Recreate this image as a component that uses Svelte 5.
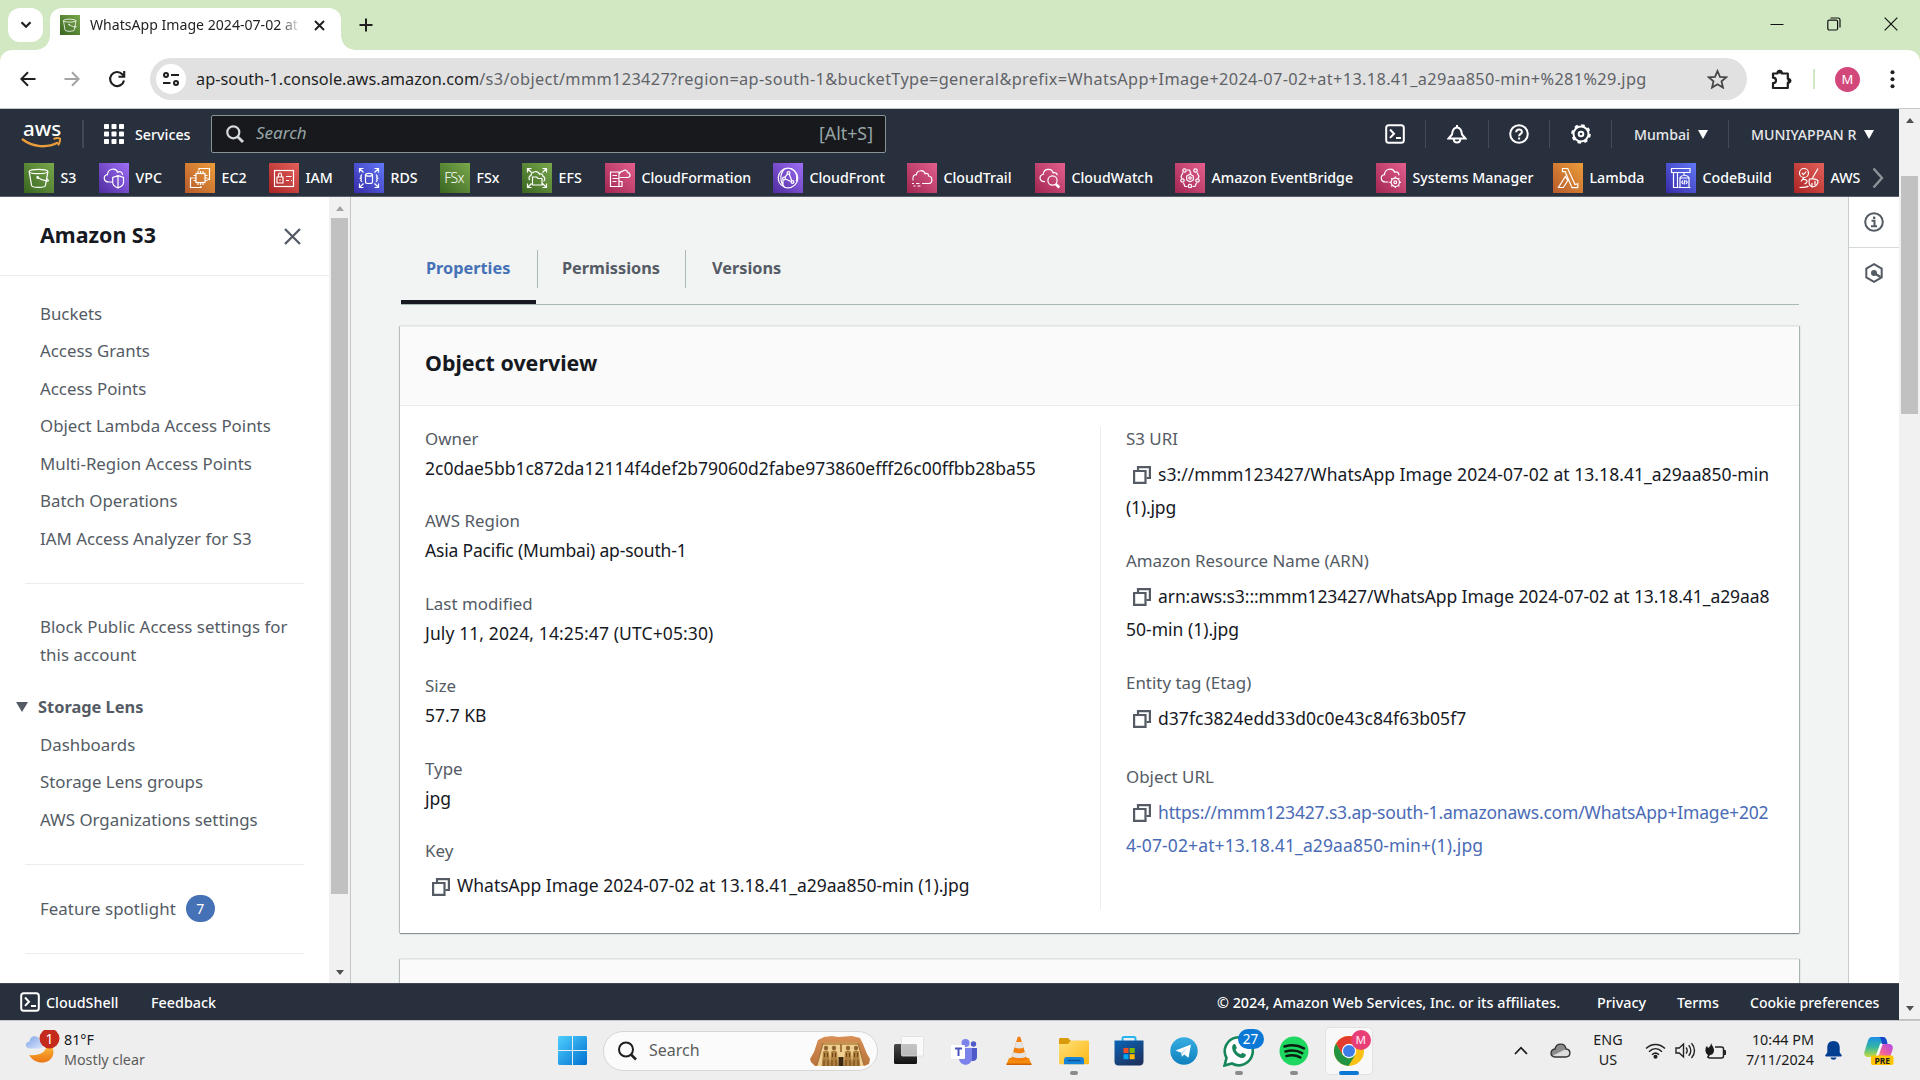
<script>
  const services = [
    { id: 's3', name: 'S3', tone: 'green', w: 75 },
    { id: 'vpc', name: 'VPC', tone: 'purple', w: 86 },
    { id: 'ec2', name: 'EC2', tone: 'orange', w: 84 },
    { id: 'iam', name: 'IAM', tone: 'red', w: 85 },
    { id: 'rds', name: 'RDS', tone: 'blue', w: 86 },
    { id: 'fsx', name: 'FSx', tone: 'green', w: 82 },
    { id: 'efs', name: 'EFS', tone: 'green', w: 83 },
    { id: 'cfn', name: 'CloudFormation', tone: 'pink', w: 168 },
    { id: 'cf', name: 'CloudFront', tone: 'purple', w: 134 },
    { id: 'trail', name: 'CloudTrail', tone: 'pink', w: 128 },
    { id: 'watch', name: 'CloudWatch', tone: 'pink', w: 140 },
    { id: 'bridge', name: 'Amazon EventBridge', tone: 'pink', w: 201 },
    { id: 'ssm', name: 'Systems Manager', tone: 'pink', w: 177 },
    { id: 'lambda', name: 'Lambda', tone: 'orange', w: 113 },
    { id: 'build', name: 'CodeBuild', tone: 'blue', w: 128 },
    { id: 'aws', name: 'AWS', tone: 'red', w: 78 }
  ];
  const favColumns = services.map((s) => s.w + 'px').join(' ');

  const nav = [
    'Buckets',
    'Access Grants',
    'Access Points',
    'Object Lambda Access Points',
    'Multi-Region Access Points',
    'Batch Operations',
    'IAM Access Analyzer for S3'
  ];
  const lens = ['Dashboards', 'Storage Lens groups', 'AWS Organizations settings'];

  // `track` names the letter-spacing class of each line
  const left = [
    { label: 'Owner', lines: ['2c0dae5bb1c872da12114f4def2b79060d2fabe973860efff26c00ffbb28ba55'] },
    { label: 'AWS Region', track: ['tight'], lines: ['Asia Pacific (Mumbai) ap-south-1'] },
    { label: 'Last modified', track: ['loose'], lines: ['July 11, 2024, 14:25:47 (UTC+05:30)'] },
    { label: 'Size', lines: ['57.7 KB'] },
    { label: 'Type', lines: ['jpg'] },
    { label: 'Key', copy: true, lines: ['WhatsApp Image 2024-07-02 at 13.18.41_a29aa850-min (1).jpg'] }
  ];
  const right = [
    { label: 'S3 URI', copy: true, track: ['airy', 'tight'], lines: ['s3://mmm123427/WhatsApp Image 2024-07-02 at 13.18.41_a29aa850-min', '(1).jpg'] },
    { label: 'Amazon Resource Name (ARN)', copy: true, track: ['snug', ''], lines: ['arn:aws:s3:::mmm123427/WhatsApp Image 2024-07-02 at 13.18.41_a29aa8', '50-min (1).jpg'] },
    { label: 'Entity tag (Etag)', copy: true, tall: true, track: ['airy'], lines: ['d37fc3824edd33d0c0e43c84f63b05f7'] },
    { label: 'Object URL', copy: true, link: true, track: ['tight', 'loose'], lines: ['https://mmm123427.s3.ap-south-1.amazonaws.com/WhatsApp+Image+202', '4-07-02+at+13.18.41_a29aa850-min+(1).jpg'] }
  ];
</script>

{#snippet glyph(id)}
  <svg class="glyph" viewBox="0 0 30 30">
    {#if id === 's3'}
      <ellipse cx="14.5" cy="8.5" rx="9.3" ry="2.2" />
      <path d="M5.2 8.6l2.3 13.6c.3 3 13.7 3 14 0l2.4-13.6M14 14.8c2 1.300 6.200 2.900 9 3.300 2 .2 1.600-1.100-.5-2.500" />
      <circle cx="13.700" cy="14.500" r=".8" />
    {:else if id === 'vpc'}
      <path d="M13.500 19H9.600C4 19 4 11.900 8.500 11.600 8.700 5.500 17 4.200 18.700 9.200c2.300-1.500 5 .2 4.800 2.700" />
      <path d="M19 12.600l5.500 1.800v5.200c0 3.200-2.700 4.400-5.500 5.400-2.800-1-5.300-2.200-5.300-5.400v-5.200zM19 12.800v12" />
    {:else if id === 'ec2'}
      <rect x="11" y="10.500" width="9" height="9" />
      <path d="M13 8v2.500M15.500 8v2.500M18 8v2.500M13 19.500V22M15.500 19.500V22M18 19.500V22M8.500 12.500H11M8.500 15H11M8.500 17.500H11M20 12.500h2.500M20 15h2.500M20 17.500h2.500" />
      <path d="M14 7.500V5.500h10.500v10.800h-2M8 15H5.500v9.500H16V23" />
    {:else if id === 'iam'}
      <rect x="5.500" y="7.500" width="19" height="16" />
      <path d="M8 14h6v6H8zM9.500 14v-2.500c0-2 3-2 3 0V14M11 16.300v1.500M17 13.500h5.500M17 17.500h3M22 17.500h1" />
    {:else if id === 'rds'}
      <ellipse cx="15" cy="11.700" rx="3.500" ry="1.400" />
      <path d="M11.500 11.700v7.500c0 1.700 7 1.700 7 0v-7.500M8 11.500l-1.200 1.500.6 1.200-1.200 1 1.200 1-.6 1.300L8 19M22 11.500l1.200 1.500-.6 1.200 1.200 1-1.200 1 .6 1.300L22 19M5.500 9.500v-4h4M5.500 5.500l4 4M20.500 5.500h4v4M24.500 5.500l-4 4M5.500 20.500v4h4M5.500 24.500l4-4M24.500 20.500v4h-4M24.500 24.500l-4-4" />
    {:else if id === 'fsx'}
      <text x="4.300" y="20.300">FSx</text>
    {:else if id === 'efs'}
      <path d="M8 17c-2-1-1-4 .8-4.300.8-4.500 7-5.500 8.700-1.500 2-.9 3.500.5 3.500 2.200 2.500.6 2.300 3.800.5 4.800M10.500 14h4l1.500 1.500h4v6.500h-9.500zM5.500 9.500v-4h4M5.500 5.500l4 4M20.500 5.500h4v4M24.500 5.500l-4 4M5.500 20.500v4h4M5.500 24.500l4-4M24.500 20.500v4h-4M24.500 24.500l-4-4" />
    {:else if id === 'cfn'}
      <path d="M5.500 9h8.500v14.500H5.500zM7.500 12.500H12M7.500 15.500h6M7.500 18.500h4M14 18.500h3v5h-3M15 14.500h7.500c3.300-.2 3.300-4.300.3-4.800-.5-3-4.200-3.500-5.200-1.300-2-.3-3 1-2.600 2.600" />
    {:else if id === 'cf'}
      <circle cx="15" cy="15" r="9.800" />
      <circle cx="15.500" cy="10" r="1.400" /><circle cx="11" cy="15.500" r="1.400" /><circle cx="19.500" cy="19" r="1.400" />
      <path d="M14.500 11l-2.700 3.300M16.300 11.200l2.500 6.500M12.300 16l5.700 2.500M11.500 6c-5 5-4.700 13 0 18M18 5.500c5 2.500 6.500 8 5.500 13M10 17v6" />
    {:else if id === 'trail'}
      <path d="M6 17.500c-1-5 2-6 3.200-5.700 1-5 7.500-5.500 9-1 2-1 3.500.4 3.400 2.200C26 13.500 26 20.500 21.500 20.500H15M5 20.500h2M9 20.500h3.500M6.500 23h2M10.500 23h3" />
    {:else if id === 'watch'}
      <path d="M10 18.500c-6 .5-6.500-6.500-1.800-7 .3-6 8.500-7 10-1.500 2.300-1 4 .3 4 2.200" />
      <circle cx="17.500" cy="17.500" r="4.600" /><path d="M20.800 21l3.500 3.500" class="fat" />
    {:else if id === 'bridge'}
      <path d="M15 11.200l3.300 1.900v3.800L15 18.800l-3.300-1.900v-3.800z" />
      <circle cx="15" cy="15" r="1.200" /><circle cx="9.500" cy="7.500" r="1.700" /><circle cx="20.500" cy="7.500" r="1.700" /><circle cx="7.500" cy="17.500" r="1.700" /><circle cx="22.500" cy="17.500" r="1.700" /><circle cx="15" cy="23" r="1.700" />
      <path d="M12 7h2.500l1.500 4M8 9.500l-2 4 1.200 2M22 9.500l2 4-1.200 2M8.500 20l1.500 3.500h2.500M21.500 20L20 23.500h-2.500" />
    {:else if id === 'ssm'}
      <path d="M12.500 19H9.600C4 19 4 11.900 8.500 11.600 8.700 5.500 17 4.200 18.700 9.200c2.800-.9 4.300.8 4.200 3" />
      <circle cx="19.300" cy="19.300" r="4.200" /><circle cx="19.300" cy="19.300" r="1.400" />
      <path d="M19.300 13.500v1.600M19.300 23.500v1.600M13.500 19.300h1.600M23.500 19.300h1.600M15.200 15.200l1.100 1.100M22.300 22.300l1.100 1.100M23.400 15.200l-1.100 1.100M16.300 22.300l-1.100 1.100" />
    {:else if id === 'lambda'}
      <path d="M9.500 5.500h5.200l7.300 16 2.800-.8v4H19l-6.800-16H9.500zM12.300 13.500L5.500 24.500h4.800l4.500-7z" />
    {:else if id === 'build'}
      <path d="M5.500 5.500h18.500v4H5.500zM7.500 9.500h4v15h-4zM18 9.500v3M14 24.500V14.500c2-3 7-3 9 0v10zM12.500 24.500h12M14 15h9M17 17.500l-1.200 1.800L17 21M20 17.500l1.200 1.800L20 21M19 17l-1 4.500" />
    {:else}
      <circle cx="10" cy="10" r="4.500" />
      <path d="M8 10l1.500 1.700 2.800-3M10 14.500l-3 4M8 16.500c5-1 7 2.500 2.500 4.500M5.500 24.500c5 0 7.500-.2 9-1.500M24 5.500l-5.500 9.500M15.500 16c3 0 7.500-1 8.500 2 .5 3-2.500 6-6 6-3-1-3.500-5-2.500-8zM18 20v3.500M21 18v4" />
    {/if}
  </svg>
{/snippet}

{#snippet shell(size)}
  <svg width={size} height={size} viewBox="0 0 20 20" fill="none" stroke="#fff" stroke-width="2">
    <rect x="1.200" y="1.200" width="17.600" height="17.600" rx="2.500" />
    <path d="M5 5.500l4 4.200-4 4.200M11 14h5" />
  </svg>
{/snippet}

{#snippet group(items)}
  <div class="kv-col">
    {#each items as f}
      <div class="kv" class:copyable={f.copy} class:tall={f.tall}>
        <div class="k">{f.label}</div>
        {#each f.lines as line, i}
          <div class="v" class:link={f.link}>
            {#if f.copy && i === 0}
              <svg class="copy" viewBox="0 0 18 18" fill="none" stroke="#545b64" stroke-width="2.200"><path d="M5 4.500V1.100h11.900V12h-3.500" /><path d="M1.100 5h11.400v11.900H1.100z" /></svg>
            {/if}<span class={f.track?.[i]}>{line}</span>
          </div>
        {/each}
      </div>
    {/each}
  </div>
{/snippet}

<div class="screen">
  <div class="tabstrip">
    <div class="tab-search">
      <svg width="12" height="8" viewBox="0 0 12 8" fill="none" stroke="#1f1f1f" stroke-width="2.200"><path d="M1.500 1.200L6 5.800l4.500-4.600" /></svg>
    </div>
    <div class="tab">
      <div class="favicon tone-green">{@render glyph('s3')}</div>
      <span class="tab-title">WhatsApp Image 2024-07-02 at</span>
      <svg class="tab-x" width="11" height="11" viewBox="0 0 11 11" stroke="#1f1f1f" stroke-width="1.900"><path d="M1 1l9 9M10 1l-9 9" /></svg>
    </div>
    <svg class="plus" width="14" height="14" viewBox="0 0 14 14" stroke="#1f1f1f" stroke-width="2"><path d="M7 .5v13M.5 7h13" /></svg>
    <div class="win">
      <svg width="14" height="14" viewBox="0 0 14 14" stroke="#111" fill="none"><path d="M.5 7.500h13" /></svg>
      <svg width="14" height="14" viewBox="0 0 14 14" stroke="#111" fill="none" stroke-width="1.200"><rect x=".8" y="3.200" width="9.800" height="9.800" rx="1.500" /><path d="M3.500 1h7.500c1.300 0 2 .8 2 2v7.500" /></svg>
      <svg width="14" height="14" viewBox="0 0 14 14" stroke="#111" fill="none" stroke-width="1.200"><path d="M.7.700l12.600 12.600M13.300.700L.7 13.300" /></svg>
    </div>
  </div>

  <div class="toolbar-back">
    <div class="toolbar">
      <svg width="16" height="16" viewBox="0 0 16 16" fill="none" stroke="#1f1f1f" stroke-width="2"><path d="M15.500 8H1.800M8 1.200L1.300 8 8 14.800" /></svg>
      <svg width="16" height="16" viewBox="0 0 16 16" fill="none" stroke="#a4a4a4" stroke-width="2"><path d="M.5 8h13.700M8 1.200L14.700 8 8 14.800" /></svg>
      <svg width="18" height="18" viewBox="0 0 18 18" fill="none" stroke="#1f1f1f" stroke-width="2.100"><path d="M16 10.500A7 7 0 1 1 14.300 4.300L16 6" /><path d="M16.200 1v5.700h-5.700" /></svg>
      <div class="omnibox">
        <div class="site">
          <svg width="16" height="14" viewBox="0 0 16 14" fill="none" stroke="#1f1f1f" stroke-width="2"><circle cx="3" cy="3" r="2" /><path d="M8 3h8M0 11h7.500" /><circle cx="13" cy="11" r="2" /></svg>
        </div>
        <div class="url"><span>ap-south-1.console.aws.amazon.com</span>/s3/object/mmm123427?region=ap-south-1&amp;bucketType=general&amp;prefix=WhatsApp+Image+2024-07-02+at+13.18.41_a29aa850-min+%281%29.jpg</div>
        <svg class="star" width="21" height="20" viewBox="0 0 21 20" fill="none" stroke="#474747" stroke-width="1.800"><path d="M10.500 2l2.500 5.800 6.300.5-4.800 4.100 1.500 6.200-5.500-3.300L5 18.600l1.500-6.200L1.700 8.300 8 7.800z" /></svg>
      </div>
      <svg class="ext" width="21" height="21" viewBox="0 0 21 21"><path d="M2 4.500h4.500c-.7-3.500 5-3.500 4.300 0h6v5.300c3-.5 3 4.500 0 4v5.200H2v-4.800c4-.5 4-5.200 0-5.500z" fill="none" stroke="#1f1f1f" stroke-width="2.200" stroke-linejoin="round" /><circle cx="8.700" cy="2.700" r="2" fill="#1f1f1f" /><circle cx="18.500" cy="11.800" r="2" fill="#1f1f1f" /></svg>
      <div class="sep"></div>
      <div class="avatar">M</div>
      <svg class="dots" width="5" height="19" viewBox="0 0 5 19" fill="#1f1f1f"><circle cx="2.500" cy="2.300" r="2" /><circle cx="2.500" cy="9.300" r="2" /><circle cx="2.500" cy="16.300" r="2" /></svg>
    </div>
  </div>

  <div class="viewport">
    <div class="console">
      <header>
        <div class="bar">
          <div class="logo">
            <span>aws</span>
            <svg width="41" height="12" viewBox="0 0 41 12" fill="none" stroke="#e99c3a" stroke-width="2"><path d="M1 2c11 8.500 25 9.200 36 3.500" stroke-width="2.400" /><path d="M32.500 2c2.500-1 5-1.100 6.500-.4.300 2.200-.5 4.700-2 6.800" /></svg>
          </div>
          <div class="services">
            <svg width="20" height="20" viewBox="0 0 20 20" fill="#fff">
              {#each [0, 7.500, 15] as y}{#each [0, 7.500, 15] as x}<rect {x} {y} width="5" height="5" rx=".8" />{/each}{/each}
            </svg>
            <span>Services</span>
          </div>
          <div class="search">
            <svg width="18" height="18" viewBox="0 0 18 18" fill="none" stroke="#d5dbdb" stroke-width="2.200"><circle cx="7.300" cy="7.300" r="6" /><path d="M11.700 11.700l5.300 5.300" stroke-width="2.800" /></svg>
            <em>Search</em>
            <span>[Alt+S]</span>
          </div>
          <div></div>
          <div class="tool">{@render shell(20)}</div>
          <div class="tool"><svg width="20" height="20" viewBox="0 0 20 20" fill="none" stroke="#fff" stroke-width="2"><path d="M10 1v2M1.500 14.500h17L15 10.500C14.500 6 12.500 3.500 10 3.500S5.500 6 5 10.500z" /><path d="M6.700 15c.2 4.800 6.400 4.800 6.600 0" /></svg></div>
          <div class="tool"><svg width="20" height="20" viewBox="0 0 20 20" fill="none" stroke="#fff" stroke-width="2"><circle cx="10" cy="10" r="8.800" /><path d="M7.200 8.200c0-3.800 5.800-3.600 5.700-.3 0 2-2.800 2-2.800 4.400M10.100 13.500v2" /></svg></div>
          <div class="tool"><svg width="20" height="20" viewBox="0 0 20 20" fill="none" stroke="#fff"><circle cx="10" cy="10" r="7.500" stroke-width="2" /><circle cx="10" cy="10" r="8.800" stroke-width="2" stroke-dasharray="3.456" /><circle cx="10" cy="10" r="2.300" stroke-width="2" /></svg></div>
          <div class="tool menu">Mumbai<i></i></div>
          <div class="tool menu last">MUNIYAPPAN R<i></i></div>
        </div>
        <div class="favs" style:grid-template-columns={favColumns}>
          {#each services as s}
            <div class="fav"><div class="tile tone-{s.tone}">{@render glyph(s.id)}</div><span>{s.name}</span></div>
          {/each}
          <svg width="12" height="22" viewBox="0 0 12 22" fill="none" stroke="#8d9499" stroke-width="2.400"><path d="M1.500 1.500l8.500 9.500-8.500 9.500" /></svg>
        </div>
      </header>

      <div class="body">
        <aside>
          <div class="side">
            <div class="side-head">
              <h2>Amazon S3</h2>
              <svg width="17" height="17" viewBox="0 0 17 17" stroke="#545b64" stroke-width="2.300"><path d="M1 1l15 15M16 1L1 16" /></svg>
            </div>
            <nav>
              {#each nav as n}<a href="#top">{n}</a>{/each}
              <hr />
              <a class="two" href="#top">Block Public Access settings for<br />this account</a>
              <div class="lens"><i></i><b>Storage Lens</b></div>
              {#each lens as n}<a href="#top">{n}</a>{/each}
              <hr />
              <div class="feature">Feature spotlight<span>7</span></div>
              <hr />
            </nav>
          </div>
          <div class="scroll side-scroll"><i class="up dim"></i><div class="thumb"></div><i class="down"></i></div>
        </aside>

        <main>
          <div class="tabs">
            <div class="t on"><span>Properties</span></div>
            <div class="t"><span>Permissions</span></div>
            <div class="t"><span>Versions</span></div>
          </div>
          <section class="card">
            <h3>Object overview</h3>
            <div class="cols">
              {@render group(left)}
              {@render group(right)}
            </div>
          </section>
          <section class="card next"></section>
        </main>

        <div class="rail">
          <div><svg width="20" height="20" viewBox="0 0 20 20" fill="none" stroke="#545b64" stroke-width="2"><circle cx="10" cy="10" r="8.800" /><path d="M7.500 8.800h3v5M7 14.300h6" /><path d="M9 5.800h2.300" stroke-width="2.400" /></svg></div>
          <div><svg width="20" height="20" viewBox="0 0 20 20" fill="none" stroke="#545b64" stroke-width="2"><path d="M10 1.200l7.700 4.400v8.800L10 18.800l-7.700-4.400V5.600z" /><circle cx="10" cy="10" r="3" fill="#545b64" stroke="none" /><path d="M10 10l6.500 4" stroke-width="2.400" /></svg></div>
        </div>
      </div>

      <footer>
        {@render shell(20)}
        <span>CloudShell</span><span>Feedback</span>
        <span>© 2024, Amazon Web Services, Inc. or its affiliates.</span><span>Privacy</span><span>Terms</span><span>Cookie preferences</span>
      </footer>
    </div>
    <div class="scroll page-scroll"><i class="up"></i><div class="thumb"></div><i class="down"></i></div>
  </div>

  <div class="taskbar">
    <div class="weather">
      <svg width="36" height="38" viewBox="0 0 36 38">
        <defs><linearGradient id="moon" x2="0" y2="1"><stop stop-color="#ffc23d" /><stop offset="1" stop-color="#ea7413" /></linearGradient><linearGradient id="cl" x2="1" y2="1"><stop stop-color="#7da4e8" /><stop offset="1" stop-color="#dbe6fb" /></linearGradient></defs>
        <path d="M22 14c6 1 8 7 5.500 12.500C24 34.500 10 35 4 25c9 1 18-2 18-11z" fill="url(#moon)" />
        <path d="M5 18.500c-5.500 0-5.500-6.500-.5-7C5 5 13 4.500 14.500 9.500c5 .5 5 9 0 9z" fill="url(#cl)" />
        <circle cx="24.500" cy="8.500" r="10" fill="#c42b1c" />
        <text x="24.500" y="13.500" text-anchor="middle" fill="#fff" font-size="14" font-family="Noto Sans">1</text>
      </svg>
      <div><span>81°F</span><small>Mostly clear</small></div>
    </div>
    <svg class="start" width="29" height="29" viewBox="0 0 29 29"><defs><linearGradient id="win" x2="1" y2="1"><stop stop-color="#4fd0ff" /><stop offset="1" stop-color="#006fd0" /></linearGradient></defs><path d="M1 0h13v14H0V1zM15 0h13l1 1v13H15zM0 15h14v14H1l-1-1zM15 15h14v13l-1 1H15z" fill="url(#win)" /></svg>
    <div class="tsearch">
      <svg width="19" height="20" viewBox="0 0 19 20" fill="none" stroke="#1f1f1f" stroke-width="2"><circle cx="8" cy="8.500" r="7" /><path d="M13 13.500l5 5" stroke-width="2.500" /></svg>
      <span>Search</span>
      <svg width="61" height="32" viewBox="0 0 61 32">
        <defs><linearGradient id="temple" x2="0" y2="1"><stop stop-color="#d98f54" /><stop offset="1" stop-color="#b8743c" /></linearGradient></defs>
        <path d="M8 5l6-3 8-1 6 1 14-1 8 2 3 6 4 10 3 5-1 5-5 2H5l-4-4-1-3 4-7z" fill="url(#temple)" />
        <path d="M13 7h35l6 24H7z" fill="#efcf92" />
        <path d="M13 7h35l1 3H12.500z" fill="#c49552" />
        {#each [16, 24, 38, 46] as x}
          <circle cx={x} cy="13" r="2.200" fill="#8f6430" /><path d="M{x - 3} 17c1-2 5-2 6 0l.5 6 .8 8h-8.600l.8-8z" fill="#b0803f" /><path d="M{x - 1.500} 18v4M{x + 1.500} 18v4M{x - 2} 25v6M{x + 2} 25v6" stroke="#6b451c" stroke-width="1" />
        {/each}
        <path d="M28.500 22h5v9h-5z" fill="#3c2710" /><path d="M30 9h2v8h-2z" fill="#a5773a" />
        <path d="M48 8l6 22M13 8L7 30" stroke="#a4713c" stroke-width="1.200" />
      </svg>
    </div>
    <div class="apps">
      <div class="app"><svg width="30" height="30" viewBox="0 0 30 30"><defs><linearGradient id="tv" x2="0" y2="1"><stop stop-color="#4a4a4a" /><stop offset="1" stop-color="#111" /></linearGradient></defs><rect y="8" width="23" height="20" rx="1.500" fill="url(#tv)" /><rect x="7.500" y=".5" width="22" height="19.500" rx="1" fill="#fff" fill-opacity=".68" stroke="#ddd" stroke-width=".8" /></svg></div>
      <div class="app"><svg width="28" height="28" viewBox="0 0 28 28"><circle cx="15.500" cy="6" r="4" fill="#7b83eb" /><circle cx="23.500" cy="7" r="2.700" fill="#5059c9" /><path d="M19 11h8v9c0 4-4 5-8 3z" fill="#5059c9" /><path d="M9 11h13v10c0 9-13 9-13 0z" fill="#7b83eb" /><rect x="1" y="8" width="14" height="14" rx="1.200" fill="#fff" /><path d="M5 11.500h7M8.500 11.500V19" stroke="#4b53bc" stroke-width="2" /></svg></div>
      <div class="app"><svg width="26" height="30" viewBox="0 0 26 30"><path d="M3 22h20l2.500 6.500H.5z" fill="#f58a0b" /><path d="M.5 27.500h25v1.500H.5z" fill="#cf6206" /><path d="M11.500 1.500c.5-1.200 2.500-1.200 3 0L21 23c-2 2.500-14 2.500-16 0z" fill="#f37f10" /><path d="M10.200 6h5.600l1.700 5.500c-2 1.200-7 1.200-9 0zM7 16c3 1.700 9 1.700 12 0l1.300 4.500c-3 2-11.600 2-14.600 0z" fill="#e4e4e4" /></svg></div>
      <div class="app"><svg width="30" height="28" viewBox="0 0 30 28"><defs><linearGradient id="fold" x2="1" y2="1"><stop stop-color="#ffe07a" /><stop offset="1" stop-color="#fdb813" /></linearGradient></defs><path d="M0 2.500C0 1.500.5 1 1.500 1H9l3 3v4H0z" fill="#d99a0b" /><path d="M0 7h9l3-3.500h16.500c1 0 1.500.5 1.500 1.500v21c0 .8-.5 1.200-1.200 1.200H1.200C.5 27.200 0 26.800 0 26z" fill="url(#fold)" /><path d="M5 27.200V23c0-2 1-3 3-3h14c2 0 3 1 3 3v4.200z" fill="#1583d8" /><path d="M8.500 23.500h13" stroke="#0b4f94" stroke-width="1.300" /></svg><i class="run"></i></div>
      <div class="app"><svg width="30" height="30" viewBox="0 0 30 30"><defs><linearGradient id="st" x2=".6" y2="1"><stop stop-color="#0a64b8" /><stop offset="1" stop-color="#1d3463" /></linearGradient></defs><path d="M8.500 6V2.500c0-1 .5-1.500 1.500-1.500h10c1 0 1.500.5 1.500 1.500V6" fill="none" stroke="#27b4f2" stroke-width="2" /><path d="M.5 4.500h29v21c0 2.500-1.500 4-4 4h-21c-2.500 0-4-1.500-4-4z" fill="url(#st)" /><path d="M9.500 12h5v5h-5z" fill="#f25022" /><path d="M15.700 12h5v5h-5z" fill="#7fba00" /><path d="M9.500 18.200h5v5h-5z" fill="#00a4ef" /><path d="M15.700 18.200h5v5h-5z" fill="#ffb900" /></svg></div>
      <div class="app"><svg width="28" height="28" viewBox="0 0 28 28"><defs><linearGradient id="tg" x2="0" y2="1"><stop stop-color="#37aee2" /><stop offset="1" stop-color="#0f80bd" /></linearGradient></defs><circle cx="14" cy="14" r="13.700" fill="url(#tg)" /><path d="M5.500 13.500L21 7.500l-2.500 13.300-4.300-3.200-2.200 2.200-.8-4z" fill="#fff" /><path d="M11.300 15.500l6.500-5.300-5 6.500-.8 3z" fill="#c8daea" /></svg></div>
      <div class="app"><svg width="32" height="32" viewBox="0 0 32 32"><path d="M1.500 30.500l2-7.500A14 14 0 1 1 9 28.500z" fill="#fff" stroke="#17865a" stroke-width="2.600" /><path d="M9.500 10.500c1.500-2 2.500-1.800 3.200-.2l1 2.300c.3.800-1.200 1.800-1 2.300 1.300 2.300 2.500 3.400 4.800 4.400.7.300 1.500-1.700 2.200-1.500l2.800 1.400c1.200.5-.4 3.800-3.300 3.800-5.200 0-11.700-7.300-9.700-12.500z" fill="#17865a" /></svg><b class="n27">27</b><i class="run"></i></div>
      <div class="app"><svg width="30" height="30" viewBox="0 0 30 30"><circle cx="15" cy="15" r="14.500" fill="#1ed760" /><path d="M5.500 10.500c6-1.800 14-1.200 19.500 1.800M6.500 15.500c5.500-1.600 12-1 16.700 1.600M7.500 20c4.500-1.200 10-.7 13.800 1.400" fill="none" stroke="#0a1f12" stroke-width="2.600" stroke-linecap="round" /></svg><i class="run"></i></div>
      <div class="app active"><svg width="30" height="30" viewBox="0 0 30 30"><circle cx="15" cy="15" r="15" fill="#fbc116" /><path d="M15 0A15 15 0 0 0 2 7.500l6.500 11.300L15 8h13.300A15 15 0 0 0 15 0z" fill="#e33b2e" /><path d="M2 7.500A15 15 0 0 0 14.500 30L21.500 18.500 15 22.500 8.500 18.800z" fill="#229342" /><circle cx="15" cy="15" r="7.200" fill="#fff" /><circle cx="15" cy="15" r="6" fill="#3e7de8" /></svg><b class="nm">M</b><i class="cur"></i></div>
    </div>
    <div class="tray">
      <svg width="14" height="9" viewBox="0 0 14 9" fill="none" stroke="#1b1b1b" stroke-width="1.800"><path d="M1 8l6-6.300L13 8" /></svg>
      <svg width="21" height="15" viewBox="0 0 21 15"><path d="M5 14C-.5 14 0 6.500 5 6 6.500-.5 15-.5 16 6c5 .3 5.500 8-.5 8z" fill="#ddd" /><path d="M5 6C7-.5 14.500-.2 16 6L2 13C0 10 1.500 6.500 5 6z" fill="#8c8c8c" /><path d="M5 14C-.5 14 0 6.500 5 6 6.500-.5 15-.5 16 6c5 .3 5.500 8-.5 8z" fill="none" stroke="#333" stroke-width="1.400" /></svg>
      <div class="lang">ENG<br />US</div>
      <svg width="21" height="16" viewBox="0 0 21 16" fill="none" stroke="#222" stroke-width="1.500"><path d="M1 5.500c5.500-5.500 13.500-5.500 19 0M4 8.700c4-4 9-4 13 0M7 11.700c2.200-2 4.800-2 7 0" /><circle cx="10.500" cy="13.700" r="1.300" fill="#222" /></svg>
      <svg width="21" height="17" viewBox="0 0 21 17" fill="none" stroke="#222" stroke-width="1.400"><path d="M1 6h3.200L8.500 2v13L4.200 11H1zM11 5.500c1.600 1.700 1.600 4.500 0 6M13.700 3.300c2.800 3 2.800 7.500 0 10.500M16.500 1.200c4 4.300 4 10.500 0 14.800" /></svg>
      <svg width="21" height="18" viewBox="0 0 21 18"><path d="M10 5h6.500c1.200 0 2 .8 2 2v7c0 1.200-.8 2-2 2H5c-1 0-1.800-.6-2-1.500" fill="none" stroke="#222" stroke-width="1.500" /><path d="M19 8.500h1.500v4H19z" fill="#222" stroke="#222" /><path d="M6 1c.5 2 3.500 4.500 3 8-.5 3-2.500 4-4 4L3 16l-1-.5L3 13C-1 10.500.5 5 2 4l1 2C4.500 5 6 3.500 6 1z" fill="#1b1b1b" /></svg>
      <div class="clock">10:44 PM<br />7/11/2024</div>
      <svg width="17" height="19" viewBox="0 0 17 19" fill="#003e92"><path d="M8.500 0c4 0 6.200 2.800 6.200 6.500v5l2 2.700c.3.800 0 1.300-1 1.300H1.300c-1 0-1.300-.5-1-1.300l2-2.700v-5C2.300 2.800 4.500 0 8.500 0zM5.500 16.500h6c-.5 3-5.500 3-6 0z" /></svg>
      <svg width="30" height="29" viewBox="0 0 30 29"><defs><linearGradient id="cpa" x2="0" y2="1"><stop stop-color="#1c8fe8" /><stop offset=".5" stop-color="#35b6a2" /><stop offset="1" stop-color="#c9dc3a" /></linearGradient><linearGradient id="cpb" x1="1" x2="0" y2="1"><stop stop-color="#b14be8" /><stop offset=".6" stop-color="#ee5f9d" /><stop offset="1" stop-color="#ffa05a" /></linearGradient></defs><path d="M8 1h11c2 0 3 1.500 3.500 3l1 3H17l-4 11c-.8 2-1.800 3-4 3H4c-3 0-4.500-2.500-3.500-5.500L4 4.500C4.800 2.200 6 1 8 1z" fill="url(#cpa)" /><path d="M15 1h4c2 0 3 1.500 3.500 3l1 4H18c-.5-3-1-6-3-7z" fill="#1749c8" /><path d="M19 8h6c3 0 4.500 2.500 3.600 5.500L26 21H12c2 0 2.800-1.500 3.500-3.500L18 10z" fill="url(#cpb)" /><path d="M17 8l-4.500 13" stroke="#fff" stroke-width="1.800" /><rect x="7" y="19.500" width="22.500" height="9.500" rx="2" fill="#ffc500" /><text x="18.200" y="27.500" text-anchor="middle" font-size="8.500" font-weight="700" font-family="Noto Sans" fill="#222">PRE</text></svg>
    </div>
  </div>
</div>

<style>
  :global(body) { margin: 0; background: #fff; }
  .screen { width: 1920px; height: 1080px; display: flex; flex-direction: column; overflow: hidden; font-family: 'Noto Sans', sans-serif; color: #16191f; white-space: nowrap; }
  .screen * { box-sizing: border-box; }
  svg { display: block; flex: none; }
  a { color: inherit; text-decoration: none; }

  .tabstrip { height: 50px; background: #d2e8c2; display: flex; align-items: flex-start; padding-left: 8px; flex: none; }
  .tab-search { width: 35px; height: 34px; margin: 8px 7px 0 0; border-radius: 12px; background: #fff; display: grid; place-items: center; }
  .tab { position: relative; width: 291px; height: 42px; margin-top: 8px; border-radius: 12px 12px 0 0; background: #fff; display: flex; align-items: center; padding: 0 16px 8px 10px; }
  .tab::before, .tab::after { content: ''; position: absolute; bottom: 0; width: 14px; height: 14px; }
  .tab::before { left: -14px; background: radial-gradient(circle at 0 0, transparent 13.500px, #fff 14px); }
  .tab::after { right: -14px; background: radial-gradient(circle at 100% 0, transparent 13.500px, #fff 14px); }
  .favicon { width: 20px; height: 20px; margin-right: 10px; }
  .tab-title { width: 210px; overflow: hidden; font-size: 14.100px; line-height: 26px; color: #1f1f1f; mask-image: linear-gradient(90deg, #000 190px, transparent 211px); }
  .tab-x { margin-left: auto; }
  .plus { margin: 18px 0 0 18px; }
  .win { margin-left: auto; display: flex; gap: 43px; padding: 17px 22px 0 0; }

  .toolbar-back { height: 59px; background: #d2e8c2; flex: none; }
  .toolbar { height: 59px; border-bottom: 1px solid #c5c7c9; border-radius: 12px 12px 0 0; background: #fff; display: flex; align-items: center; padding: 0 0 0 20px; }
  .toolbar > svg:nth-child(2) { margin-left: 28px; }
  .toolbar > svg:nth-child(3) { margin-left: 28px; }
  .omnibox { width: 1597px; height: 42px; margin-left: 24px; border-radius: 21px; background: #e1e1e1; display: flex; align-items: center; padding: 0 19px 0 6px; }
  .site { width: 30px; height: 30px; border-radius: 50%; background: #fff; display: grid; place-items: center; margin-right: 10px; }
  .url { font-size: 16.300px; line-height: 28px; color: #5f6368; letter-spacing: 0.360px; }
  .url span { color: #1f1f1f; letter-spacing: 0.020px; }
  .star { margin-left: auto; }
  .ext { margin-left: 24px; }
  .sep { width: 2px; height: 20px; margin: 0 20px 0 21px; background: #d2e8c2; }
  .avatar { width: 25px; height: 25px; border-radius: 50%; background: #d3487a; color: #fff; font-size: 13px; line-height: 25px; text-align: center; }
  .dots { margin-left: 30px; }

  .viewport { height: 911px; display: flex; flex: none; }
  .console { width: 1899px; display: flex; flex-direction: column; }
  header { height: 88px; background: #282f3d; border-bottom: 1px solid #596069; color: #fff; flex: none; }
  .bar { height: 50px; display: grid; grid-template-columns: 84px 127px 675px 1fr 61px 63px 61px 62px 117px 170px; align-items: center; }
  .logo { padding-left: 21px; height: 38px; position: relative; }
  .logo span { display: block; font-size: 20.500px; line-height: 20px; padding: 3px 0 0 2px; font-weight: 500; }
  .logo svg { margin-top: -1px; }
  .services { height: 28px; border-left: 2px solid #414954; margin-left: -2px; display: flex; align-items: center; padding-left: 20px; gap: 11px; font-size: 14.250px; font-weight: 500; }
  .search { height: 38px; border: 1px solid #879596; border-radius: 2px; background: #18191d; display: flex; align-items: center; padding: 0 12px 0 14px; font-size: 17px; line-height: 34px; color: #95a5a6; }
  .search em, .search span { height: 36px; }
  .search em { margin-left: 12px; }
  .search span { margin-left: auto; font-size: 17.800px; }
  .tool { height: 28px; display: grid; place-items: center; border-right: 1px solid #444b57; }
  .tool.menu { display: flex; align-items: center; padding-left: 22px; font-size: 14.150px; font-weight: 500; color: #e6e8ea; }
  .tool.last { border: 0; }
  .menu i { margin-left: 8px; border: 5.500px solid transparent; border-top: 9px solid #fff; border-bottom: 0; }
  .favs { display: grid; align-items: center; height: 37px; padding-left: 24px; grid-auto-flow: column; }
  .fav { display: flex; align-items: center; gap: 6.500px; font-size: 14.200px; font-weight: 500; line-height: 28px; }
  .tile { width: 30px; height: 30px; flex: none; }
  .glyph { width: 100%; height: 100%; fill: none; stroke: #fff; stroke-width: 1.200; }
  .glyph text { fill: #fff; stroke: none; font: 300 14px 'Noto Sans', sans-serif; letter-spacing: -0.800px; }
  .glyph .fat { stroke-width: 2.600; }
  .tone-green { background: linear-gradient(45deg, #396620, #7aa84c); }
  .tone-purple { background: linear-gradient(45deg, #4f2c9f, #9f6ef7); }
  .tone-orange { background: linear-gradient(45deg, #b75a2c, #eb9d39); }
  .tone-red { background: linear-gradient(45deg, #a92423, #e4605b); }
  .tone-blue { background: linear-gradient(45deg, #372aa8, #6178f8); }
  .tone-pink { background: linear-gradient(45deg, #a22652, #e35f8e); }

  .body { height: 786px; display: flex; flex: none; }
  aside { width: 351px; display: flex; background: #fff; border-right: 1px solid #c3c6c6; }
  .side { width: 329px; }
  .side-head { height: 78.500px; border-bottom: 1px solid #eaeded; display: flex; justify-content: space-between; padding: 21px 28px 0 40px; }
  .side-head svg { margin-top: 9.500px; }
  h2, h3 { margin: 0; font-weight: 700; font-size: 21.400px; line-height: 34px; }
  nav { padding: 19px 25px 0; font-size: 16.850px; color: #545b64; }
  nav a { display: block; height: 37.500px; line-height: 37.500px; padding-left: 15px; }
  hr { margin: 26px 0 0; border: 0; border-top: 1px solid #eaeded; }
  nav .two { height: 56px; line-height: 28px; margin: 29px 0 19px; letter-spacing: 0.040px; }
  .lens { display: flex; align-items: center; height: 37.500px; margin-left: -9px; gap: 10px; }
  .lens b { font-weight: 700; font-size: 16.400px; }
  .lens i { border: 6.500px solid transparent; border-top: 10px solid #545b64; border-bottom: 0; }
  .feature { height: 28px; margin-top: 29.500px; display: flex; align-items: center; padding-left: 15px; letter-spacing: 0.050px; }
  .feature span { width: 29px; height: 27px; margin-left: 10px; border-radius: 14px; background: #4571b6; color: #fff; font-size: 14px; line-height: 27px; text-align: center; }
  .feature + hr { margin-top: 30px; }

  .scroll { background: #f1f1f1; display: flex; flex-direction: column; align-items: center; }
  .side-scroll { width: 21px; height: 786px; }
  .side-scroll .thumb { width: 17px; height: 676px; margin-top: 7px; background: #c1c1c1; }
  .page-scroll { width: 21px; height: 911px; border-bottom: 1px solid #bfbfbf; }
  .page-scroll .thumb { width: 17px; height: 238px; margin-top: 53px; background: #c1c1c1; }
  .up, .down { border: 4.500px solid transparent; }
  .up { border-bottom: 5px solid #505050; border-top: 0; margin-top: 9px; }
  .up.dim { border-bottom-color: #a3a3a3; }
  .down { border-top: 5px solid #505050; border-bottom: 0; margin: auto 0 8px; }

  main { width: 1497px; background: #f2f3f3; overflow: hidden; padding: 40px 49px 0; }
  .tabs { height: 68px; margin-left: 1px; border-bottom: 1px solid #aab7b8; display: flex; font-size: 16.300px; font-weight: 700; color: #545b64; }
  .t { height: 67px; padding-top: 13px; }
  .t span { display: block; height: 38px; line-height: 36px; padding: 0 25px 0 26px; border-right: 1px solid #aab7b8; }
  .t:last-child span { border: 0; }
  .t.on { color: #4571b6; border-bottom: 4px solid #16191f; width: 135px; }
  .t.on span { width: 136.500px; padding-left: 25px; }
  .card { margin-top: 21px; width: 1399px; height: 607px; background: #fff; border-top: 1px solid #eaeded; box-shadow: 0 1px 1px rgba(0, 28, 36, 0.4), 1px 0 1px rgba(0, 28, 36, 0.25), -1px 0 1px rgba(0, 28, 36, 0.18); }
  .card h3 { height: 79px; padding: 19px 25px 0; background: #fafafa; border-bottom: 1px solid #eaeded; }
  .card.next { margin-top: 26px; background: #fafafa; }
  .cols { display: grid; grid-template-columns: 700px 1fr; padding-top: 21px; }
  .kv-col { padding-left: 25px; height: 482px; }
  .kv-col + .kv-col { border-left: 1px solid #eaeded; }
  .kv { margin-bottom: 22.400px; }
  .kv:first-child { margin-top: -3px; }
  .kv-col + .kv-col .kv { margin-bottom: 21.700px; }
  .kv-col + .kv-col .kv.tall { margin-bottom: 26.500px; }
  .k { font-size: 16.900px; line-height: 30px; color: #545b64; }
  .v { font-size: 17.500px; line-height: 30px; height: 30px; display: flex; align-items: center; }
  .v span { margin-top: -2px; }
  .tight { letter-spacing: -0.180px; }
  .snug { letter-spacing: -0.080px; }
  .airy { letter-spacing: 0.040px; }
  .loose { letter-spacing: 0.110px; }
  .copyable .v { line-height: 33px; height: 33px; }
  .copyable .k { margin-bottom: 4.500px; }
  .copy { width: 18px; height: 18px; margin: 0 7px; }
  .v.link { color: #4a6bb5; }

  .rail { width: 51px; background: #fff; border-left: 1px solid #c9cccc; }
  .rail div { height: 51px; display: grid; place-items: center; border-bottom: 1px solid #d5dbdb; }
  .rail div:last-child { border: 0; height: 50px; }

  footer { height: 37px; background: #282f3d; border-top: 1px solid #414750; color: #fff; font-size: 14.330px; font-weight: 500; display: grid; grid-template-columns: 26px 105px 1066px 380px 80px 73px 1fr; align-items: center; padding-left: 20px; flex: none; }
  footer span:last-child { font-size: 14.050px; }

  .taskbar { height: 60px; background: #eeeeee; border-top: 1px solid #c8c8c8; display: flex; align-items: center; flex: none; }
  .weather { width: 533px; display: flex; padding-left: 25px; gap: 3px; font-size: 14.300px; line-height: 20px; margin-top: -2px; }
  .weather span, .weather small { display: block; font-size: 14.300px; }
  .weather small { color: #5c5c5c; }
  .start { margin-left: 25px; }
  .tsearch { width: 275px; height: 40px; margin-left: 16px; border: 1px solid #d6d6d6; border-radius: 20px; background: #fbfbfb; display: flex; align-items: center; padding: 0 6px 0 14px; font-size: 16px; color: #5c5c5c; }
  .tsearch span { margin: -1px auto 0 12px; }
  .apps { display: grid; grid-template-columns: repeat(9, 55.100px); margin-left: 3px; }
  .app { position: relative; height: 48px; display: grid; place-items: center; }
  .app.active { width: 48px; margin-left: 3px; border: 1px solid #e2e2e2; border-radius: 5px; background: #f8f8f8; }
  .run, .cur { position: absolute; bottom: 0; left: 50%; border-radius: 2px; transform: translateX(-50%); }
  .run { width: 8px; height: 4px; background: #8b8b8b; }
  .cur { width: 20px; height: 4px; background: #0a78d4; bottom: -1px; }
  .n27 { position: absolute; left: 26px; top: 2px; width: 26px; height: 20px; border-radius: 10px; background: #0a78d4; color: #fff; font-size: 13.500px; font-weight: 400; line-height: 20px; text-align: center; }
  .nm { position: absolute; left: 25px; top: 2px; width: 20px; height: 20px; border-radius: 50%; background: #e83e76; color: #fde; font-size: 11.500px; font-weight: 500; line-height: 20px; text-align: center; }
  .tray { margin: 0 15px 0 auto; display: grid; grid-template-columns: 43px 36px 60px 34px 26px 34px 82px 39px 52px; align-items: center; justify-items: center; font-size: 14.350px; line-height: 20px; color: #1b1b1b; }
  .lang, .clock { text-align: center; margin-top: -1px; }
  .clock { justify-self: end; text-align: right; }
</style>
